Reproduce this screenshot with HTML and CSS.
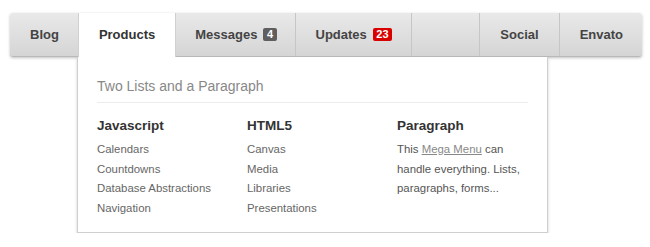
FILE: index.html
```html
<!DOCTYPE html>
<html>
<head>
<meta charset="utf-8">
<link rel="stylesheet" href="styles.css">
</head>
<body>
<nav class="menu">
  <ul class="bar">
    <li class="item"><a href="#">Blog</a></li>
    <li class="item active"><a href="#">Products</a></li>
    <li class="item msg"><a href="#">Messages <span class="badge gray">4</span></a></li>
    <li class="item upd"><a href="#">Updates <span class="badge red">23</span></a></li>
    <li class="item social"><a href="#">Social</a></li>
    <li class="item envato"><a href="#">Envato</a></li>
  </ul>
  <div class="drop">
    <div class="drop-title">Two Lists and a Paragraph</div>
    <div class="cols">
      <div class="col">
        <div class="col-head">Javascript</div>
        <ul class="links">
          <li>Calendars</li>
          <li>Countdowns</li>
          <li>Database Abstractions</li>
          <li>Navigation</li>
        </ul>
      </div>
      <div class="col">
        <div class="col-head">HTML5</div>
        <ul class="links">
          <li>Canvas</li>
          <li>Media</li>
          <li>Libraries</li>
          <li>Presentations</li>
        </ul>
      </div>
      <div class="col para">
        <div class="col-head">Paragraph</div>
        <p class="para-text">This <a href="#">Mega Menu</a> can handle everything. Lists, paragraphs, forms...</p>
      </div>
    </div>
  </div>
</nav>
</body>
</html>
```
FILE: styles.css
```css
* { box-sizing: border-box; }
body {
  margin: 0;
  background: #fff;
  font-family: "Liberation Sans", Arial, sans-serif;
}
.menu {
  margin: 13px 0 0 10px;
  width: 632px;
}
.bar {
  list-style: none;
  margin: 0;
  padding: 0;
  display: flex;
  height: 44px;
  background: linear-gradient(#e9e9e9, #d5d5d5);
  border-bottom: 1px solid #b9b9b9;
  border-radius: 3px;
  box-shadow: 0 1px 3px rgba(0,0,0,0.25);
}
.item {
  display: flex;
}
.item > a {
  display: flex;
  align-items: center;
  padding: 0 20px;
  color: #444;
  font-weight: bold;
  font-size: 13px;
  text-decoration: none;
}
.item:first-child > a { padding: 0 19px 0 20px; }
.active {
  height: 44px;
  background: #fff;
  border-left: 1px solid #d0d0d0;
  border-right: 1px solid #d0d0d0;
}
.active > a { color: #333; padding: 0 20px 1px; }
.msg { border-right: 1px solid #c6c6c6; }
.msg > a { padding: 0 18px 0 19px; }
.upd { border-right: 1px solid #c6c6c6; }
.upd > a { padding: 0 19px 0 20px; }
.social { margin-left: auto; border-left: 1px solid #c6c6c6; }
.envato { border-left: 1px solid #c6c6c6; }
.envato > a { padding: 0 19px 0 20px; }
.badge {
  display: inline-block;
  margin-left: 6px;
  padding: 0 3.5px;
  font-size: 11px;
  line-height: 13px;
  color: #fff;
  border-radius: 2px;
}
.gray { background: #5e5e5e; }
.red { background: #d90000; }
.drop {
  margin-left: 67px;
  width: 471px;
  height: 176px;
  background: #fff;
  border: 1px solid #cfcfcf;
  border-top: none;
  box-shadow: 0 2px 3px rgba(0,0,0,0.18);
  padding: 19px 19px 0 19px;
}
.drop-title {
  font-size: 14px;
  line-height: 20px;
  color: #888;
  padding-bottom: 6px;
  border-bottom: 1px solid #ececec;
}
.cols {
  display: flex;
  margin-top: 14px;
}
.col { flex: none; width: 150px; }
.col.para { flex: 1; width: auto; }
.col-head {
  margin: 0 0 5px;
  font-size: 13.5px;
  font-weight: bold;
  line-height: 18px;
  color: #333;
}
.links {
  list-style: none;
  margin: 0;
  padding: 0;
}
.links li {
  font-size: 11.4px;
  line-height: 19.5px;
  color: #666;
}
.para-text {
  margin: 0;
  width: 130px;
  font-size: 11.4px;
  line-height: 19.5px;
  color: #555;
}
.para-text a { color: #888; }
```
